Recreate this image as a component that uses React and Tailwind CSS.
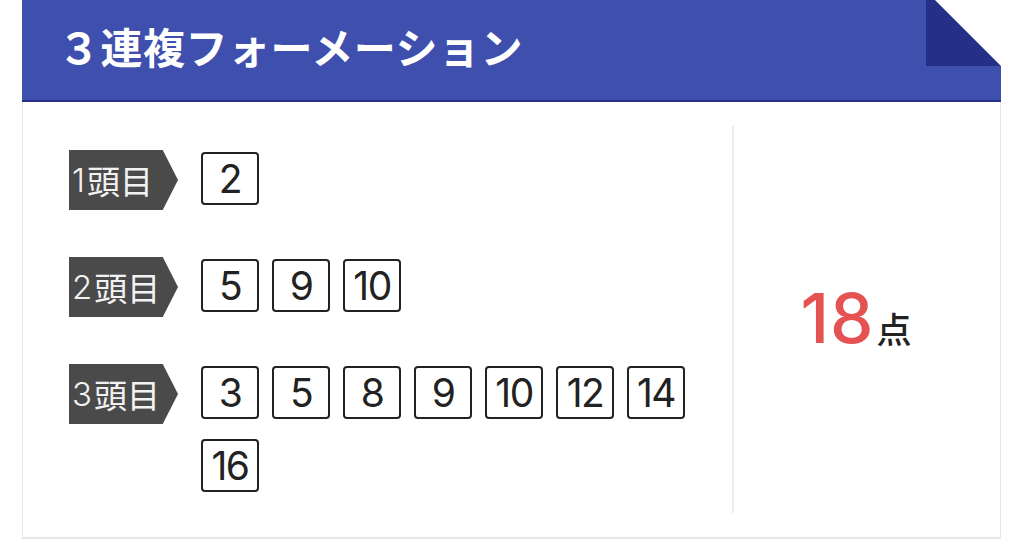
import React from 'react';

const FONT = { fontFamily: '"Noto Sans CJK JP", "Noto Sans", sans-serif' };
const NUM_FONT = { fontFamily: 'Inter, "Noto Sans CJK JP", sans-serif' };

const rows = [
  { label: '1頭目', nums: [2] },
  { label: '2頭目', nums: [5, 9, 10] },
  { label: '3頭目', nums: [3, 5, 8, 9, 10, 12, 14, 16] },
];

// 着順ラベル（右向き矢印型）
const RankTag = ({ children }) => (
  <div className="shrink-0 w-[109px] h-[60px] bg-[#4a4a4a] text-[#f2f2f2] text-[33px] leading-none flex items-center pl-[3px] [clip-path:polygon(0_0,86%_0,100%_50%,86%_100%,0_100%)]">
    <span style={NUM_FONT} className="font-light mr-[2px]">{children[0]}</span>
    <span>{children.slice(1)}</span>
  </div>
);

const NumBox = ({ n }) => (
  <div
    style={NUM_FONT}
    className="w-[58px] h-[53px] border-2 border-[#222] rounded-[4px] flex items-center justify-center text-[39px] leading-none text-[#222] tracking-[-1.5px]"
  >
    {n}
  </div>
);

export default function App() {
  return (
    <div className="w-[1024px] h-[549px] bg-white overflow-hidden" style={FONT}>
      <div className="ml-[22px] w-[979px]">
        {/* 見出し */}
        <div className="relative h-[102px] bg-[#3f4fae] border-b-2 border-[#27318a] flex items-center pl-[36px] pb-[8px]">
          <h2 className="text-white text-[42px] font-bold leading-none tracking-[0.5px]">３連複フォーメーション</h2>
          <svg className="absolute top-0 right-0" width="75" height="66" viewBox="0 0 75 66">
            <polygon points="0,0 9,0 75,66 0,66" fill="#252f87" />
            <polygon points="9,0 75,0 75,66" fill="#ffffff" />
          </svg>
        </div>

        {/* 本体 */}
        <div className="flex border-x border-b-2 border-[#e6e6e6] py-[24px] h-[437px]">
          <div className="w-[711px] border-r-2 border-[#ececec] pl-[46px] pt-[24px] flex flex-col gap-[47px]">
            {rows.map((r) => (
              <div key={r.label} className="flex items-start">
                <RankTag>{r.label}</RankTag>
                <div className="ml-[23px] mt-[2px] w-[500px] flex flex-wrap gap-x-[13px] gap-y-[20px]">
                  {r.nums.map((n) => (
                    <NumBox key={n} n={n} />
                  ))}
                </div>
              </div>
            ))}
          </div>
          <div className="flex-1 flex items-baseline justify-center pt-[158px] pr-[22px]">
            <span style={NUM_FONT} className="text-[#e45252] text-[69px] font-medium leading-none tracking-[1px]">18</span>
            <span className="text-[#222] text-[35px] font-medium leading-none ml-[2px]">点</span>
          </div>
        </div>
      </div>
    </div>
  );
}
